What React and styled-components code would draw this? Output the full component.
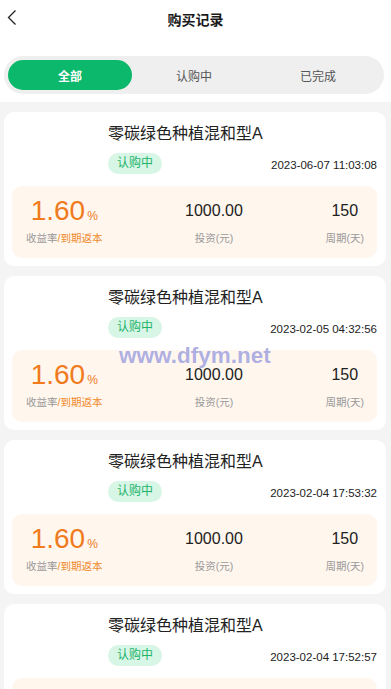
import React, { useState } from 'react';
import styled, { createGlobalStyle } from 'styled-components';

const GlobalStyle = createGlobalStyle`
  html, body {
    margin: 0;
    padding: 0;
    overflow: hidden;
    background: #f4f4f4;
    font-family: "Liberation Sans", "Noto Sans CJK SC", sans-serif;
  }
`;

const Page = styled.div`
  position: relative;
  width: 391px;
  height: 689px;
  overflow: hidden;
  background: #f4f4f4;
`;

const Top = styled.div`
  background: #fff;
  padding-bottom: 8px;
`;

const Header = styled.div`
  position: relative;
  height: 40px;
  display: flex;
  align-items: center;
  justify-content: center;
`;

const BackButton = styled.div`
  position: absolute;
  left: 4px;
  top: 6px;
  width: 20px;
  height: 24px;
  cursor: pointer;
`;

const Title = styled.h1`
  margin: 0;
  font-size: 14px;
  font-weight: 700;
  color: #1a1a1a;
  margin-top: -3px;
`;

const Tabs = styled.div`
  margin: 16px 7px 0 4px;
  height: 38px;
  box-sizing: border-box;
  padding: 4px;
  border-radius: 19px;
  background: #efefef;
  display: flex;
`;

const Tab = styled.div`
  flex: 1;
  display: flex;
  align-items: center;
  justify-content: center;
  border-radius: 15px;
  font-size: 12px;
  font-weight: ${(p) => (p.$active ? 700 : 400)};
  color: ${(p) => (p.$active ? '#fff' : '#555')};
  background: ${(p) => (p.$active ? '#0cb86c' : 'transparent')};
  cursor: pointer;
`;

const List = styled.div`
  padding: 10px 5px 0 4px;
  display: flex;
  flex-direction: column;
  gap: 10px;
`;

const Card = styled.div`
  background: #fff;
  border-radius: 10px;
  padding: 12px 9px 8px 8px;
`;

const CardHead = styled.div`
  display: flex;
`;

const Thumb = styled.div`
  width: 96px;
  flex-shrink: 0;
`;

const Info = styled.div`
  flex: 1;
  display: flex;
  flex-direction: column;
  gap: 9px;
`;

const Name = styled.div`
  font-size: 16px;
  line-height: 20px;
  color: #222;
`;

const Meta = styled.div`
  display: flex;
  align-items: center;
  justify-content: space-between;
`;

const Tag = styled.span`
  height: 21px;
  padding: 0 9px;
  border-radius: 11px;
  background: #d7f6e6;
  color: #22b36a;
  font-size: 12px;
  line-height: 21px;
`;

const Time = styled.span`
  font-size: 11.5px;
  color: #222;
  padding-top: 2px;
`;

const Stats = styled.div`
  margin-top: 12px;
  height: 72px;
  box-sizing: border-box;
  padding: 11px 13px 0 14px;
  border-radius: 10px;
  background: #fff6ee;
  display: flex;
  justify-content: space-between;
`;

const Stat = styled.div`
  display: flex;
  flex-direction: column;
  align-items: center;
  gap: 5px;
`;

const Value = styled.div`
  height: 28px;
  display: flex;
  align-items: ${(p) => (p.$big ? 'baseline' : 'center')};
  font-size: ${(p) => (p.$big ? '28px' : '16px')};
  line-height: 28px;
  color: ${(p) => (p.$big ? '#f07a1c' : '#222')};
`;

const Unit = styled.span`
  font-size: 12px;
  margin-left: 2px;
`;

const Label = styled.div`
  font-size: 10.5px;
  line-height: 16px;
  color: #999;
`;

const Accent = styled.span`
  color: #f08a2a;
`;

const Watermark = styled.div`
  position: absolute;
  left: 119px;
  top: 343px;
  font-family: "Liberation Sans", sans-serif;
  font-weight: 700;
  font-size: 22.5px;
  color: rgba(115, 115, 205, 0.58);
  text-shadow: 0 0 1px rgba(255, 255, 255, 0.9);
  pointer-events: none;
`;

const records = [
  { time: '2023-06-07 11:03:08' },
  { time: '2023-02-05 04:32:56' },
  { time: '2023-02-04 17:53:32' },
  { time: '2023-02-04 17:52:57' },
];

const tabs = ['全部', '认购中', '已完成'];

const App = () => {
  const [active, setActive] = useState(0);

  return (
    <Page>
      <GlobalStyle />
      <Top>
        <Header>
          <BackButton>
            <svg width="20" height="24" viewBox="0 0 20 24">
              <polyline points="11.5,4.5 4.5,11.5 11.5,18.5" fill="none" stroke="#222" strokeWidth="1.3" />
            </svg>
          </BackButton>
          <Title>购买记录</Title>
        </Header>
        <Tabs>
          {tabs.map((t, i) => (
            <Tab key={t} $active={i === active} onClick={() => setActive(i)}>
              {t}
            </Tab>
          ))}
        </Tabs>
      </Top>
      <List>
        {records.map((r) => (
          <Card key={r.time}>
            <CardHead>
              <Thumb />
              <Info>
                <Name>零碳绿色种植混和型A</Name>
                <Meta>
                  <Tag>认购中</Tag>
                  <Time>{r.time}</Time>
                </Meta>
              </Info>
            </CardHead>
            <Stats>
              <Stat>
                <Value $big>
                  1.60<Unit>%</Unit>
                </Value>
                <Label>
                  收益率<Accent>/到期返本</Accent>
                </Label>
              </Stat>
              <Stat>
                <Value>1000.00</Value>
                <Label>投资(元)</Label>
              </Stat>
              <Stat>
                <Value>150</Value>
                <Label>周期(天)</Label>
              </Stat>
            </Stats>
          </Card>
        ))}
      </List>
      <Watermark>www.dfym.net</Watermark>
    </Page>
  );
};

export default App;
